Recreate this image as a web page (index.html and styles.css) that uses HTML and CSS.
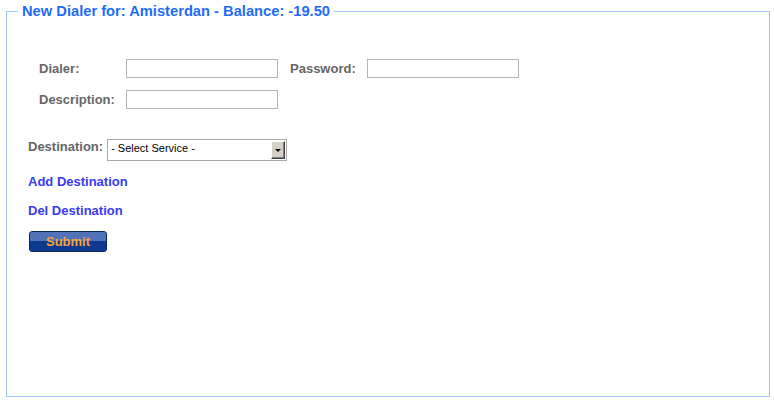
FILE: index.html
```html
<!DOCTYPE html>
<html>
    <head>
        <title>New Dialer</title>
        <meta charset="UTF-8">
        <link rel="stylesheet" href="styles.css">
    </head>
    <body>
        <fieldset class="panel">
            <legend class="panel-title">New Dialer for: Amisterdan - Balance: -19.50</legend>

            <div class="panel-body">
                <div class="dialer-grid">
                    <label class="field-label" for="dialer">Dialer:</label>
                    <input class="text-input" type="text" id="dialer">
                    <label class="field-label" for="password">Password:</label>
                    <input class="text-input" type="password" id="password">

                    <label class="field-label" for="description">Description:</label>
                    <input class="text-input" type="text" id="description">
                </div>

                <div class="destination-row">
                    <label class="field-label" for="destination">Destination:</label>
                    <span class="select-wrap">
                        <select class="select-input" id="destination">
                            <option>- Select Service -</option>
                        </select>
                    </span>
                </div>

                <a class="action-link" href="#">Add Destination</a>
                <a class="action-link" href="#">Del Destination</a>

                <button class="submit-button" type="button">Submit</button>
            </div>
        </fieldset>
    </body>
</html>
```

FILE: styles.css
```css
html, body {
    margin: 0;
    background-color: white;
    font-family: "Liberation Sans", Arial, sans-serif;
}

.panel {
    margin: 3px 4px 0 6px;
    padding: 0;
    height: 394px;
    box-sizing: border-box;
    border: 1px solid #9cc4f7;
}

.panel-title {
    margin-left: 11px;
    padding: 0 4px;
    color: #1f6cf6;
    font-size: 14.7px;
    font-weight: bold;
    line-height: 16px;
}

.panel-body {
    padding-left: 21px;
}

.field-label {
    color: #666666;
    font-size: 13px;
    font-weight: bold;
}

.dialer-grid {
    display: grid;
    grid-template-columns: 87px 152px 77px 152px;
    row-gap: 12px;
    align-items: center;
    margin: 40px 0 0 11px;
}

.dialer-grid .field-label:nth-of-type(2) {
    margin-left: 12px;
}

.dialer-grid .text-input:nth-of-type(2) {
    margin-left: 12px;
}

.text-input {
    box-sizing: border-box;
    width: 152px;
    height: 19px;
    margin: 0;
    border: 1px solid #b5b5b5;
    background: white;
}

.destination-row {
    display: flex;
    align-items: flex-start;
    gap: 4px;
    margin-top: 30px;
}

.select-wrap {
    position: relative;
    display: block;
}

.select-input {
    appearance: none;
    -webkit-appearance: none;
    display: block;
    box-sizing: border-box;
    width: 180px;
    height: 22px;
    margin: 0;
    padding: 0 0 4px 3px;
    border: 1px solid #a8a8a8;
    border-radius: 0;
    background: white;
    color: black;
    font-family: "Liberation Sans", Arial, sans-serif;
    font-size: 11px;
}

.select-wrap::after {
    content: "";
    position: absolute;
    right: 2px;
    top: 2px;
    width: 14px;
    height: 18px;
    box-sizing: border-box;
    background: #d4d0c8;
    border-top: 1px solid #ffffff;
    border-left: 1px solid #ffffff;
    border-right: 1px solid #404040;
    border-bottom: 1px solid #404040;
    box-shadow: inset -1px -1px 0 #808080;
    pointer-events: none;
}

.select-wrap::before {
    content: "";
    position: absolute;
    right: 6px;
    top: 10px;
    border-left: 3px solid transparent;
    border-right: 3px solid transparent;
    border-top: 3px solid black;
    z-index: 1;
    pointer-events: none;
}

.action-link {
    display: block;
    width: max-content;
    color: #3a3af2;
    font-size: 13px;
    font-weight: bold;
    text-decoration: none;
    margin-top: 13px;
}

.action-link + .action-link {
    margin-top: 14px;
}

.submit-button {
    display: block;
    box-sizing: border-box;
    width: 78px;
    height: 21px;
    margin: 13px 0 0 1px;
    padding: 0;
    border: 1px solid #0a2563;
    border-radius: 3px;
    background: linear-gradient(#4f72b8 0, #4f72b8 45%, #0d3a8e 45%, #0d3a8e 100%);
    color: #f8a33a;
    font-family: "Liberation Sans", Arial, sans-serif;
    font-size: 13px;
    font-weight: bold;
    cursor: pointer;
}
```
